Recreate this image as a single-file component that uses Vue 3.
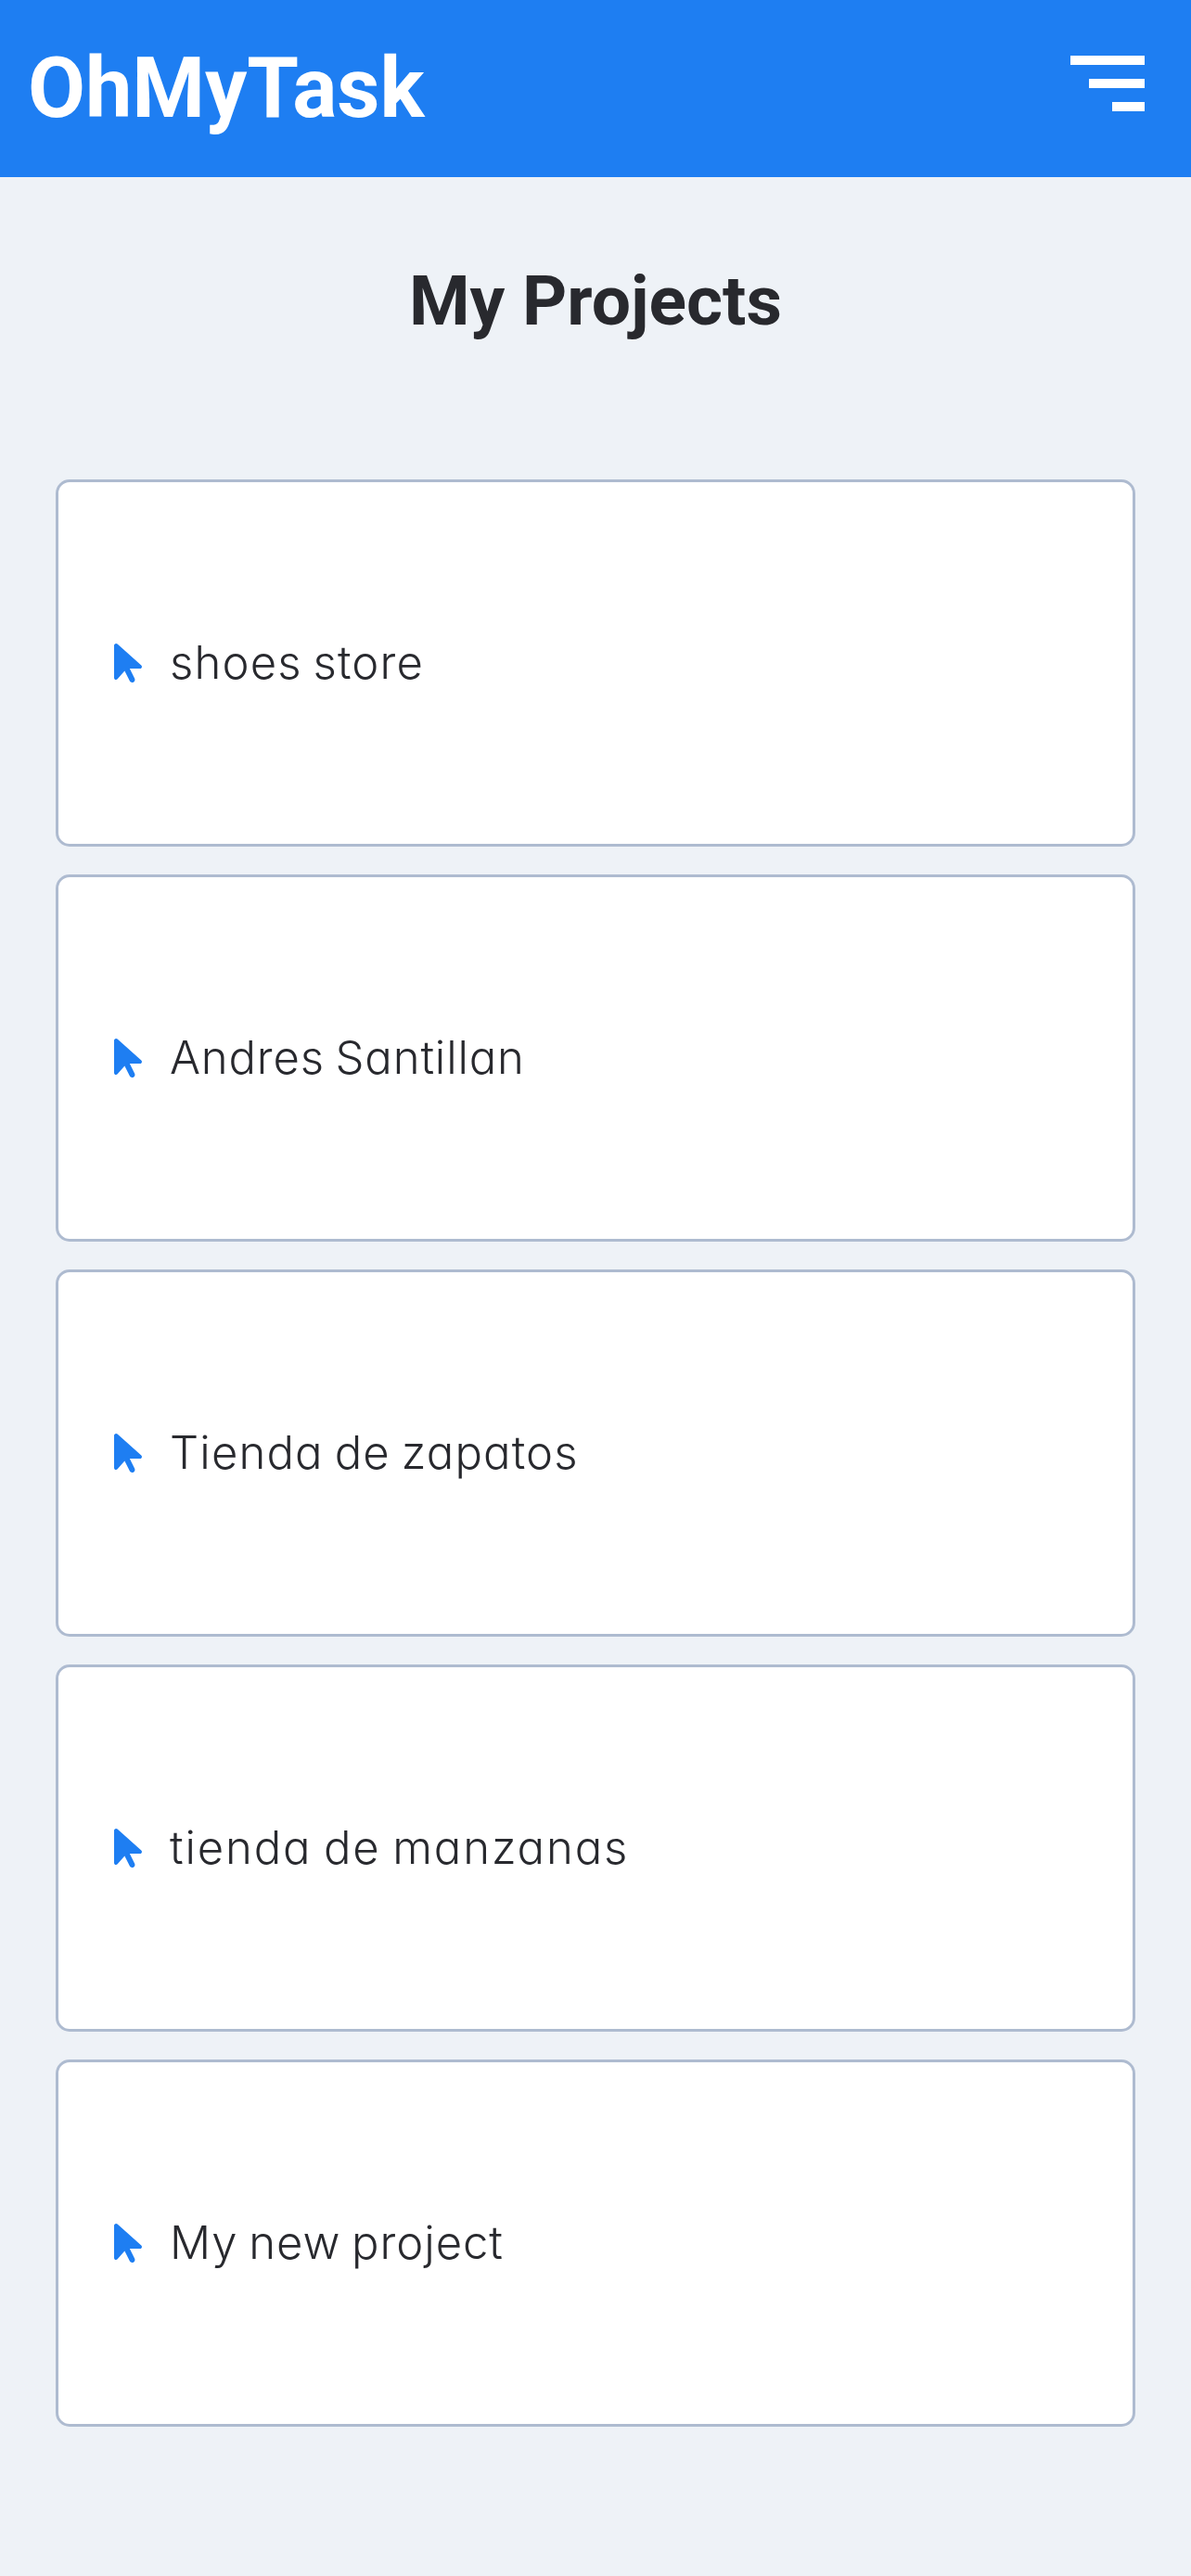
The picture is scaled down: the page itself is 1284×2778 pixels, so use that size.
<script setup>
const projects = [
  { name: 'shoes store', tracking: 1.15 },
  { name: 'Andres Santillan', tracking: 0.85 },
  { name: 'Tienda de zapatos', tracking: 1.15 },
  { name: 'tienda de manzanas', tracking: 1.85 },
  { name: 'My new project', tracking: 0.95 },
]
</script>

<template>
  <div class="page">
    <header class="topbar">
      <span class="brand">OhMyTask</span>
      <button class="menu" aria-label="Menu">
        <span class="bar"></span>
        <span class="bar medium"></span>
        <span class="bar short"></span>
      </button>
    </header>
    <main>
      <h1>My Projects</h1>
      <ul class="projects">
        <li v-for="p in projects" :key="p.name" class="card">
          <svg class="pointer" viewBox="0 0 320 512" aria-hidden="true">
            <path d="M0 55.2V426c0 12.2 9.9 22 22 22c6.3 0 12.4-2.7 16.6-7.5L121.2 346l58.1 116.3c7.9 15.8 27.1 22.2 42.9 14.3s22.2-27.1 14.3-42.9L179.8 320H297.9c12.2 0 22.1-9.9 22.1-22.1c0-6.3-2.7-12.3-7.4-16.5L38.6 37.9C34.3 34.1 28.9 32 23.2 32C10.4 32 0 42.4 0 55.2z" />
          </svg>
          <span class="name" :style="{ letterSpacing: p.tracking + 'px' }">{{ p.name }}</span>
        </li>
      </ul>
    </main>
  </div>
</template>

<style>
body {
  margin: 0;
  background: #eef2f7;
}
</style>

<style scoped>
.page {
  min-height: 2778px;
  background: #eef2f7;
  color: #28292e;
  font-family: Roboto, sans-serif;
}
.topbar {
  display: flex;
  justify-content: space-between;
  align-items: flex-start;
  box-sizing: border-box;
  height: 191px;
  padding: 43px 50px 0 30px;
  background: #1e7ef2;
}
.brand {
  color: #fff;
  font-size: 90px;
  font-weight: 700;
  line-height: 106px;
  letter-spacing: -0.1px;
}
.menu {
  display: flex;
  flex-direction: column;
  align-items: flex-end;
  gap: 15px;
  margin: 17px 0 0;
  padding: 0;
  border: 0;
  background: none;
}
.bar {
  width: 80px;
  height: 10px;
  background: #fff;
}
.medium {
  width: 60px;
}
.short {
  width: 35px;
}
h1 {
  margin: 89px 0 0;
  font-size: 75px;
  font-weight: 700;
  line-height: 88px;
  text-align: center;
}
.projects {
  display: flex;
  flex-direction: column;
  gap: 30px;
  margin: 149px 60px 0;
  padding: 0;
  list-style: none;
}
.card {
  display: flex;
  align-items: center;
  gap: 30px;
  box-sizing: border-box;
  height: 396px;
  padding: 0 60px;
  border: 3px solid #aebbd0;
  border-radius: 15px;
  background: #fff;
}
.pointer {
  width: 30px;
  height: 48px;
  fill: #1e7ef2;
}
.name {
  font-family: Inter, "Open Sans", sans-serif;
  font-feature-settings: "cv11" 1;
  font-size: 49px;
  font-weight: 300;
  line-height: 72px;
  word-spacing: -3px;
  white-space: nowrap;
}
</style>
